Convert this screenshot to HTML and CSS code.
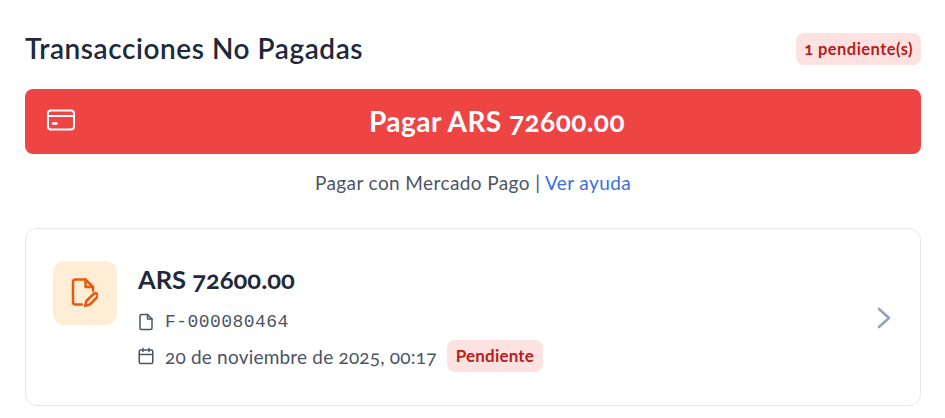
FILE: index.html

```html
<!DOCTYPE html>
<html lang="es">
<head>
<meta charset="UTF-8" />
<meta name="viewport" content="width=device-width, initial-scale=1" />
<title>Transacciones No Pagadas</title>
<link rel="stylesheet" href="styles.css">
</head>
<body>
  <div id="app">
    <!-- Encabezado -->
    <div class="encabezado">
      <h2>Transacciones No Pagadas</h2>
      <span class="badge badge-chico">1 pendiente(s)</span>
    </div>

    <!-- Boton de pago -->
    <button class="btn-pagar">
      <svg class="icono-tarjeta" viewBox="0 0 28 22" fill="none" stroke="currentColor" stroke-width="2" stroke-linecap="round" stroke-linejoin="round">
        <rect x="1" y="1.5" width="26" height="19" rx="3"/>
        <path d="M1 7h26"/>
        <path d="M6 14.5h3.5" stroke-width="2.4"/>
      </svg>
      <span>Pagar ARS 72600.00</span>
    </button>
    <p class="ayuda">Pagar con Mercado Pago | <a href="#">Ver ayuda</a></p>

    <!-- Transaccion -->
    <div class="tarjeta">
      <div class="icono-caja">
        <svg viewBox="0 0 24 24" fill="none" stroke="currentColor" stroke-width="2" stroke-linecap="round" stroke-linejoin="round">
          <path d="M11 22H6a2 2 0 0 1-2-2V4a2 2 0 0 1 2-2h8l6 6v3"/>
          <path d="M14 2v6h6"/>
          <path d="M20.4 13.6a1.9 1.9 0 0 1 2.7 2.7L17.5 22l-3.8 1 1-3.8z"/>
        </svg>
      </div>
      <div class="datos">
        <h3>ARS 72600.00</h3>
        <div class="fila">
          <svg viewBox="0 0 24 24" fill="none" stroke="currentColor" stroke-width="2" stroke-linecap="round" stroke-linejoin="round">
            <path d="M14 2H6a2 2 0 0 0-2 2v16a2 2 0 0 0 2 2h12a2 2 0 0 0 2-2V8z"/>
            <path d="M14 2v6h6"/>
          </svg>
          <span class="codigo">F-000080464</span>
        </div>
        <div class="fila">
          <svg viewBox="0 0 24 24" fill="none" stroke="currentColor" stroke-width="2" stroke-linecap="round" stroke-linejoin="round">
            <rect x="3" y="4" width="18" height="18" rx="2"/>
            <path d="M16 2v4"/>
            <path d="M8 2v4"/>
            <path d="M3 10h18"/>
          </svg>
          <span>20 de noviembre de 2025, 00:17</span>
          <span class="badge">Pendiente</span>
        </div>
      </div>
      <svg class="flecha" viewBox="0 0 14 22" fill="none" stroke="currentColor" stroke-width="2.6" stroke-linecap="round" stroke-linejoin="round">
        <path d="M2 2l10 9-10 9"/>
      </svg>
    </div>
  </div>
</body>
</html>
```

FILE: styles.css

```css
html, body {
  margin: 0;
  padding: 0;
  height: 100%;
  overflow: hidden;
  background: #fff;
  font-family: Lato, "Open Sans", sans-serif;
  font-variant-numeric: oldstyle-nums;
  color: #1e293b;
}
#app {
  padding: 33px 24px 0 25px;
}
.encabezado {
  display: flex;
  justify-content: space-between;
  align-items: center;
  margin-bottom: 24px;
}
h2 {
  margin: -2px 0 0;
  font-size: 28px;
  line-height: 32px;
  font-weight: 600;
  letter-spacing: 0.55px;
}
.badge {
  display: inline-block;
  padding: 0 9px;
  height: 32px;
  line-height: 32px;
  border-radius: 8px;
  background: #fee2e2;
  color: #b91c1c;
  font-size: 17px;
  font-weight: 700;
}
.badge-chico {
  padding: 0 8px;
  font-size: 16.5px;
  letter-spacing: 0.45px;
}
.btn-pagar {
  position: relative;
  display: block;
  width: 100%;
  height: 65px;
  padding: 0 0 2px 48px;
  border: none;
  border-radius: 8px;
  background: #ef4444;
  color: #fff;
  font-family: inherit;
  font-variant-numeric: inherit;
  font-size: 28px;
  font-weight: 700;
  letter-spacing: 0.45px;
  cursor: pointer;
}
.icono-tarjeta {
  position: absolute;
  left: 22px;
  top: 20px;
  width: 28px;
  height: 22px;
}
.ayuda {
  margin: 17px 0 33px;
  text-align: center;
  font-size: 19px;
  line-height: 24px;
  letter-spacing: 0.4px;
  color: #4b5563;
}
.ayuda a {
  color: #3b6fe0;
  text-decoration: none;
}
.tarjeta {
  display: flex;
  align-items: center;
  gap: 21px;
  height: 178px;
  box-sizing: border-box;
  padding: 0 29px 0 27px;
  border: 1px solid #e5e7eb;
  border-radius: 12px;
}
.icono-caja {
  display: flex;
  justify-content: center;
  align-items: center;
  flex: none;
  align-self: flex-start;
  width: 64px;
  height: 64px;
  margin-top: 32px;
  border-radius: 12px;
  background: #ffedd5;
  color: #ea580c;
}
.icono-caja svg {
  width: 30px;
  height: 30px;
  margin: 0 4px 2px 0;
}
.datos {
  flex: 1;
  margin-top: 1px;
}
h3 {
  margin: 0 0 11px;
  font-size: 25.5px;
  line-height: 32px;
  font-weight: 700;
}
.fila {
  display: flex;
  align-items: center;
  gap: 10px;
  height: 32px;
  margin-top: 2px;
  font-size: 19px;
  letter-spacing: 0.2px;
  color: #4b5563;
}
.fila svg {
  flex: none;
  width: 18px;
  height: 18px;
  margin-left: -1px;
}
.codigo {
  font-family: "Liberation Mono", monospace;
  font-size: 18px;
  letter-spacing: 0.45px;
}
.flecha {
  flex: none;
  width: 14px;
  height: 22px;
  margin-top: 2px;
  color: #94a3b8;
}
```
